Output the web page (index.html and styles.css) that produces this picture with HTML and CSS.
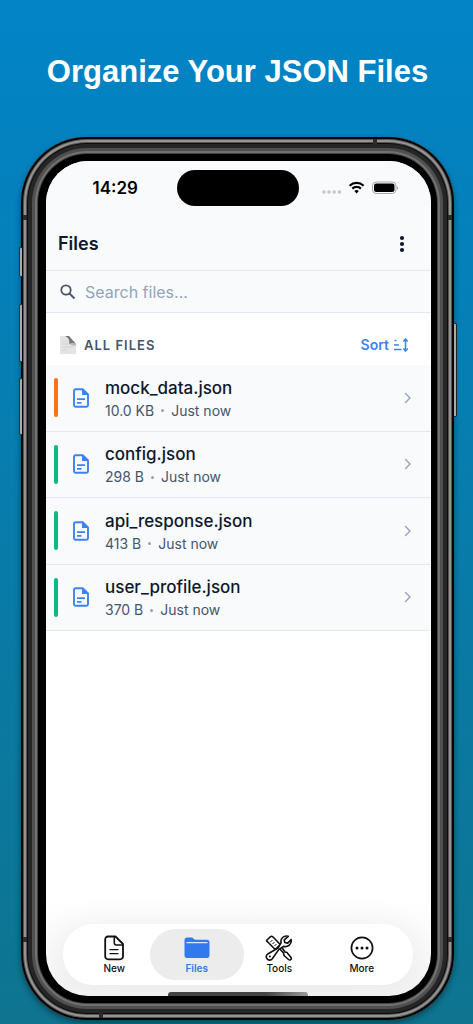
FILE: index.html
```html
<!DOCTYPE html>
<html lang="en">
<head>
    <meta charset="UTF-8">
    <meta name="viewport" content="width=device-width, initial-scale=1.0">
    <title>Organize Your JSON Files</title>
    <link rel="stylesheet" href="styles.css">
</head>
<body>
    <svg class="sprite" aria-hidden="true">
        <symbol id="icon-file" viewBox="0 0 18 20">
            <path d="M3.500 1.200h7.200L16 6.500v10.800a1.500 1.500 0 0 1-1.500 1.500h-11a1.500 1.500 0 0 1-1.500-1.500V2.700A1.500 1.500 0 0 1 3.500 1.200z" fill="none" stroke="currentColor" stroke-width="1.900"/>
            <path d="M10 1v6h6z" fill="currentColor"/>
            <path d="M5 11.200h8M5 14.800h4.500" stroke="currentColor" stroke-width="1.700"/>
        </symbol>
        <symbol id="icon-chevron" viewBox="0 0 8 12">
            <path d="M1.500 1.500L6 6l-4.500 4.500" fill="none" stroke="currentColor" stroke-width="1.400" stroke-linecap="round" stroke-linejoin="round"/>
        </symbol>
    </svg>

    <h1 class="headline">Organize Your JSON Files</h1>

    <div class="phone">
        <span class="side-button action"></span>
        <span class="side-button volume-up"></span>
        <span class="side-button volume-down"></span>
        <span class="side-button power"></span>
        <span class="seam seam-top"></span>
        <span class="seam seam-bottom"></span>
        <span class="seam seam-left-top"></span>
        <span class="seam seam-left-bottom"></span>
        <span class="seam seam-right-top"></span>
        <span class="seam seam-right-bottom"></span>

        <div class="screen">
            <div class="status-bar">
                <span class="time">14:29</span>
                <span class="island"></span>
                <svg class="status-icons" width="78" height="16" viewBox="0 0 78 16">
                    <g fill="#c6c7c9">
                        <circle cx="3" cy="12" r="1.800"/><circle cx="8" cy="12" r="1.800"/><circle cx="13.200" cy="12" r="1.800"/><circle cx="18.500" cy="12" r="1.800"/>
                    </g>
                    <g fill="none" stroke="#000" stroke-width="2.200">
                        <path d="M28.600 5.700a10.200 10.200 0 0 1 14 0"/>
                        <path d="M31.300 8.600a6.300 6.300 0 0 1 8.600 0"/>
                    </g>
                    <path d="M33.400 11a3.300 3.300 0 0 1 4.400 0l-2.200 2.500z"/>
                    <rect x="51.500" y="2" width="23.500" height="11.500" rx="3.700" fill="none" stroke="#a5a6a8"/>
                    <rect x="53" y="3.500" width="20.500" height="8.500" rx="2.200"/>
                    <path d="M76 6.300v3.500c1.600-.6 1.600-2.900 0-3.500z" fill="#a5a6a8"/>
                </svg>
            </div>

            <header class="app-header">
                <h2>Files</h2>
                <button class="menu-button" aria-label="Menu">
                    <svg width="6" height="18" viewBox="0 0 6 18" fill="#0f172a"><circle cx="3" cy="3" r="2.100"/><circle cx="3" cy="9" r="2.100"/><circle cx="3" cy="15" r="2.100"/></svg>
                </button>
            </header>

            <label class="search">
                <svg width="16" height="16" viewBox="0 0 16 16" fill="none" stroke="#475569" stroke-width="1.800"><circle cx="6" cy="6" r="4.700"/><path d="M9.500 9.500l5 5"/></svg>
                <input type="text" placeholder="Search files..." aria-label="Search files">
            </label>

            <div class="section-header">
                <svg width="16" height="18" viewBox="0 0 16 18">
                    <path d="M0 0h9l7 8v10H0z" fill="#e4e4e4"/>
                    <path d="M2 5h6M2 8h6M2 11h11M2 14h5" stroke="#d2d2d2"/>
                    <path d="M5 0h4l7 8c-2-1-5-1-7 0 1-3 0-6-4-8z" fill="#777"/>
                    <path d="M9 8c2-1 5-1 7 0v2c-3 0-5-1-7-2z" fill="#bbb"/>
                </svg>
                <h3>ALL FILES</h3>
                <button class="sort-button">Sort
                    <svg width="16" height="14" viewBox="0 0 16 14" fill="none" stroke="currentColor" stroke-width="1.500"><path d="M1.500 2.500h2M1 7h5M1 11.500h7.500"/><path d="M12.500 1.500v11M10.300 3.500l2.200-2.500 2.200 2.500M10.300 10.500l2.200 2.500 2.200-2.500"/></svg>
                </button>
            </div>

            <ul class="file-list">
                <li><a href="#" class="file">
                    <span class="bar large"></span>
                    <svg class="file-icon"><use href="#icon-file"/></svg>
                    <span class="info">
                        <span class="name">mock_data.json</span>
                        <span class="meta">10.0 KB <i></i> Just now</span>
                    </span>
                    <svg class="chevron"><use href="#icon-chevron"/></svg>
                </a></li>
                <li><a href="#" class="file">
                    <span class="bar"></span>
                    <svg class="file-icon"><use href="#icon-file"/></svg>
                    <span class="info">
                        <span class="name">config.json</span>
                        <span class="meta">298 B <i></i> Just now</span>
                    </span>
                    <svg class="chevron"><use href="#icon-chevron"/></svg>
                </a></li>
                <li><a href="#" class="file">
                    <span class="bar"></span>
                    <svg class="file-icon"><use href="#icon-file"/></svg>
                    <span class="info">
                        <span class="name">api_response.json</span>
                        <span class="meta">413 B <i></i> Just now</span>
                    </span>
                    <svg class="chevron"><use href="#icon-chevron"/></svg>
                </a></li>
                <li><a href="#" class="file">
                    <span class="bar"></span>
                    <svg class="file-icon"><use href="#icon-file"/></svg>
                    <span class="info">
                        <span class="name">user_profile.json</span>
                        <span class="meta">370 B <i></i> Just now</span>
                    </span>
                    <svg class="chevron"><use href="#icon-chevron"/></svg>
                </a></li>
            </ul>

            <nav class="tab-bar">
                <a href="#" class="tab">
                    <svg width="28" height="26" viewBox="0 0 28 26" fill="none" stroke="#111" stroke-linejoin="round">
                        <path d="M8 1.500h7.500L23 9v12.500a2.800 2.800 0 0 1-2.800 2.800H8a2.800 2.800 0 0 1-2.800-2.800v-17A2.900 2.900 0 0 1 8 1.500z" stroke-width="1.800"/>
                        <path d="M14.300 1.500V8a2 2 0 0 0 2 2H23" stroke-width="1.600"/>
                        <path d="M9.500 14.700h9M9.500 18.700h9" stroke-width="1.200"/>
                    </svg>
                    New
                </a>
                <a href="#" class="tab active">
                    <svg width="28" height="26" viewBox="0 0 28 26">
                        <path d="M1.500 6V5a2.500 2.500 0 0 1 2.500-2.500h4c1.300 0 1.800.4 2.700 1.200.8.700 1.300 1 2.300 1H24A2.500 2.500 0 0 1 26.500 7.200v13A2.800 2.800 0 0 1 23.700 23H4.300a2.800 2.800 0 0 1-2.800-2.800z" fill="#3478f0"/>
                        <path d="M3.500 7.700h21" stroke="#dfe7f5" stroke-width="1.300"/>
                    </svg>
                    Files
                </a>
                <a href="#" class="tab">
                    <svg width="28" height="26" viewBox="0 0 28 26" fill="#fff" stroke="#111" stroke-width="1.600" stroke-linejoin="round">
                        <path d="M13 12l2.500-1.500L20 17l2 .5 4 5c1 1.600-1 3.200-2.500 2L19 20.500 18.500 18z"/>
                        <path d="M1.500 5.500l3.800-3.700c.8-.7 1.700-.7 2.500 0l7.400 7.700-5 5-7.400-7.500c-.8-.6-1.200-1-1.300-1.500z"/>
                        <path d="M5.500 7l2-2M7.500 9l2-2M9.500 11l2-2" stroke-width="1"/>
                        <path d="M23.300 1.300c-4.500-1.200-8.300 2.200-7.200 6.500L13 13 3.200 18.700c-2 1.300-2.300 3.300-1.300 4.900 1.300 2 4 2.100 5.400.2l6.400-9.200 4.800-3.200c4.400 1.200 8.500-2.300 7.700-6.800l-3.500 3.500-2.900-.6-.6-2.700z"/>
                        <circle cx="4.900" cy="21.500" r="1" fill="#111" stroke="none"/>
                    </svg>
                    Tools
                </a>
                <a href="#" class="tab">
                    <svg width="28" height="26" viewBox="0 0 28 26" fill="#111">
                        <circle cx="14" cy="13" r="10.600" fill="none" stroke="#111" stroke-width="1.700"/>
                        <circle cx="9" cy="13" r="1.500"/><circle cx="14" cy="13" r="1.500"/><circle cx="19" cy="13" r="1.500"/>
                    </svg>
                    More
                </a>
            </nav>
            <span class="home-indicator"></span>
        </div>
    </div>
</body>
</html>
```

FILE: styles.css
```css
* {
    box-sizing: border-box;
}
body {
    margin: 0;
    min-height: 100vh;
    padding: 48px 19px 4px 21px;
    display: flex;
    flex-direction: column;
    background: linear-gradient(#0284c7, #0e7490);
    font-family: Inter, "Liberation Sans", sans-serif;
    color: #0f172a;
}
h1, h2, h3, ul {
    margin: 0;
    padding: 0;
}
a {
    color: inherit;
    text-decoration: none;
}
button {
    padding: 0;
    border: none;
    background: none;
    font-family: inherit;
    cursor: pointer;
}
.sprite {
    position: absolute;
    width: 0;
    height: 0;
}
.headline {
    margin-bottom: 41px;
    font-family: "Liberation Sans", sans-serif;
    font-size: 31px;
    line-height: 48px;
    text-align: center;
    color: #fff;
}

/* phone frame */
.phone {
    position: relative;
    flex: 1;
    display: flex;
    padding: 24px 23px 24px 25px;
    border-radius: 66px;
    background: #000;
    box-shadow:
        inset 0 0 0 2px #050505,
        inset 0 0 0 3px #555,
        inset 0 0 0 5px #979395,
        inset 0 0 0 6px #555,
        inset 0 0 0 7px #0c0c0c,
        inset 0 0 0 11px #262626,
        inset 0 0 0 14px #505050,
        inset 0 0 0 16px #717171,
        inset 0 0 0 17px #444,
        0 3px 6px rgba(0, 0, 0, 0.4);
}
.side-button {
    position: absolute;
    left: -2px;
    width: 3px;
    border: 1px solid #333;
    border-right: none;
    border-radius: 2px 0 0 2px;
    background: #aaa;
}
.action {
    top: 110px;
    height: 30px;
}
.volume-up {
    top: 167px;
    height: 58px;
}
.volume-down {
    top: 241px;
    height: 57px;
}
.power {
    top: 186px;
    left: auto;
    right: -3px;
    height: 94px;
    border: 1px solid #222;
    border-left: none;
    border-radius: 0 2px 2px 0;
}
.seam {
    position: absolute;
    width: 4px;
    height: 5px;
    background: #2b2b2b;
}
.seam-top {
    top: 2px;
    right: 77px;
}
.seam-bottom {
    bottom: 2px;
    left: 78px;
}
.seam-left-top {
    top: 78px;
    left: 2px;
}
.seam-left-bottom {
    bottom: 78px;
    left: 2px;
}
.seam-right-top {
    top: 78px;
    right: 2px;
}
.seam-right-bottom {
    bottom: 78px;
    right: 2px;
}

/* screen */
.screen {
    position: relative;
    flex: 1;
    min-width: 0;
    display: flex;
    flex-direction: column;
    overflow: hidden;
    border-radius: 42px;
    background: linear-gradient(#fff 88%, #f3f3f3);
}
.status-bar {
    display: grid;
    grid-template-columns: 1fr 122px 1fr;
    align-items: center;
    height: 53px;
    padding-right: 2px;
    background: #f8fafc;
}
.time {
    padding-left: 8px;
    text-align: center;
    font-size: 17px;
    line-height: 20px;
    font-weight: 600;
    color: #000;
}
.island {
    height: 36px;
    border-radius: 18px;
    background: #000;
}
.status-icons {
    justify-self: end;
    margin-right: 30px;
}
.app-header {
    display: flex;
    align-items: center;
    justify-content: space-between;
    height: 57px;
    padding: 3px 26px 0 12px;
    border-bottom: 1px solid #e2e8f0;
    background: #f8fafc;
}
.app-header h2 {
    font-size: 18px;
    line-height: 24px;
    font-weight: 600;
}
.menu-button {
    display: flex;
}
.search {
    display: flex;
    align-items: center;
    gap: 9px;
    height: 42px;
    padding: 0 14px;
    border-bottom: 1px solid #e2e8f0;
    background: #f8fafc;
}
.search input {
    flex: 1;
    min-width: 0;
    padding: 0;
    border: none;
    outline: none;
    background: none;
    font-family: inherit;
    font-size: 16px;
    line-height: 24px;
    color: #0f172a;
}
.search input::placeholder {
    color: #94a3b8;
}
.section-header {
    display: flex;
    align-items: center;
    gap: 8px;
    height: 52px;
    padding: 12px 22px 0 14px;
}
.section-header h3 {
    flex: 1;
    font-size: 13px;
    line-height: 20px;
    font-weight: 600;
    letter-spacing: 1px;
    color: #475569;
}
.sort-button {
    display: flex;
    align-items: center;
    gap: 4px;
    font-size: 14px;
    line-height: 20px;
    font-weight: 600;
    color: #3b82f6;
}
.file-list {
    display: grid;
    grid-auto-rows: 1fr;
    min-height: 266px;
    list-style: none;
}
.file-list li {
    display: flex;
    border-bottom: 1px solid #e2e8f0;
    background: #f8fafc;
}
.file {
    flex: 1;
    display: flex;
    align-items: center;
    padding: 0 19px 0 8px;
}
.bar {
    width: 4px;
    height: 39px;
    border-radius: 2px;
    background: #10b981;
}
.bar.large {
    background: #f97316;
}
.file-icon {
    width: 18px;
    height: 20px;
    margin: 0 15px 0 14px;
    color: #3b82f6;
}
.info {
    flex: 1;
    display: flex;
    flex-direction: column;
    padding-top: 2px;
}
.name {
    font-size: 17px;
    line-height: 24px;
    font-weight: 500;
}
.meta {
    display: flex;
    align-items: center;
    gap: 7px;
    font-size: 14px;
    line-height: 22px;
    color: #475569;
}
.meta i {
    width: 3px;
    height: 3px;
    border-radius: 50%;
    background: #94a3b8;
}
.chevron {
    width: 8px;
    height: 12px;
    color: #94a3b8;
}

/* bottom tabs */
.tab-bar {
    display: flex;
    margin: auto 18px 11px 17px;
    padding: 5px 10px;
    border-radius: 30px;
    background: #fff;
    box-shadow: 0 0 30px rgba(0, 0, 0, 0.06);
}
.tab {
    flex: 1;
    display: flex;
    flex-direction: column;
    align-items: center;
    margin: 0 -6px;
    padding: 6px 0 5px;
    border-radius: 26px;
    font-size: 10px;
    line-height: 14px;
    font-weight: 500;
    color: #111;
}
.tab.active {
    background: #ececec;
    font-weight: 600;
    color: #3478f0;
}
.home-indicator {
    position: absolute;
    bottom: 0;
    left: 50%;
    width: 140px;
    height: 4px;
    margin-left: -71px;
    border-radius: 3px 3px 0 0;
    background: linear-gradient(90deg, #444 70%, #999);
}
```
